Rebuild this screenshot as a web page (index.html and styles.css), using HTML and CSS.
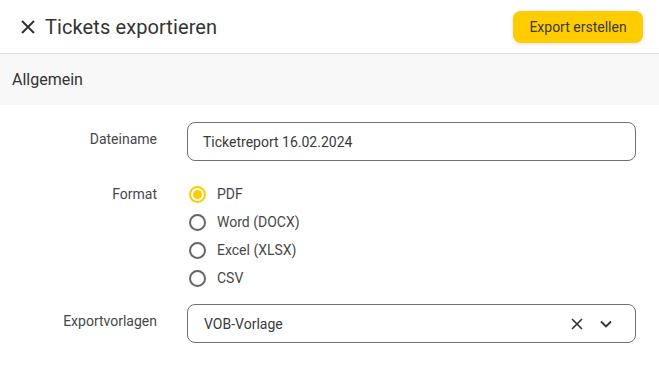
FILE: index.html
```html
<!DOCTYPE html>
<html lang="de">
<head>
<meta charset="utf-8">
<link rel="stylesheet" href="styles.css">
</head>
<body>
<header class="topbar">
  <div class="title-wrap">
    <svg class="close-icon" width="16" height="16" viewBox="0 0 16 16"><path d="M2 2 L14 14 M14 2 L2 14" stroke="#333" stroke-width="2" fill="none"/></svg>
    <h1 class="title">Tickets exportieren</h1>
  </div>
  <button class="primary-btn">Export erstellen</button>
</header>
<div class="section-head">Allgemein</div>
<form class="form">
  <label class="field-label label-input">Dateiname</label>
  <div class="input-box">Ticketreport 16.02.2024</div>

  <div class="field-label label-radio">Format</div>
  <div class="radio-group">
    <div class="radio-row"><span class="radio checked"></span><span>PDF</span></div>
    <div class="radio-row"><span class="radio"></span><span>Word (DOCX)</span></div>
    <div class="radio-row"><span class="radio"></span><span>Excel (XLSX)</span></div>
    <div class="radio-row"><span class="radio"></span><span>CSV</span></div>
  </div>

  <label class="field-label label-input">Exportvorlagen</label>
  <div class="input-box select-box">
    <span>VOB-Vorlage</span>
    <span class="select-icons">
      <svg width="12" height="12" viewBox="0 0 12 12"><path d="M1 1 L11 11 M11 1 L1 11" stroke="#333" stroke-width="1.6" fill="none"/></svg>
      <svg width="14" height="10" viewBox="0 0 14 10"><path d="M2 2.5 L7 7.5 L12 2.5" stroke="#333" stroke-width="1.8" fill="none"/></svg>
    </span>
  </div>
</form>
</body>
</html>
```
FILE: styles.css
```css
* { box-sizing: border-box; }
body {
  margin: 0;
  font-family: Roboto, "Liberation Sans", sans-serif;
  color: #333;
  background: #fff;
}
.topbar {
  height: 54px;
  border-bottom: 1px solid #dedede;
  display: flex;
  align-items: center;
  justify-content: space-between;
  padding: 0 16px 0 20px;
}
.title-wrap {
  display: flex;
  align-items: center;
  gap: 9px;
}
.close-icon { display: block; }
.title {
  margin: 0;
  font-size: 20px;
  font-weight: 400;
  color: #333;
  letter-spacing: 0.1px;
}
.primary-btn {
  width: 130px;
  height: 32px;
  border: none;
  border-radius: 8px;
  background: #ffcc00;
  color: #3a3a3a;
  font-family: Roboto, "Liberation Sans", sans-serif;
  font-size: 14px;
  box-shadow: 0 1px 4px rgba(0,0,0,0.12);
}
.section-head {
  height: 51px;
  background: #f8f8f8;
  display: flex;
  align-items: center;
  padding-left: 12px;
  font-size: 16px;
  font-weight: 400;
  color: #333;
}
.form {
  display: grid;
  grid-template-columns: 157px 449px;
  column-gap: 30px;
  padding-top: 17px;
}
.field-label {
  text-align: right;
  font-size: 14px;
  color: #474747;
}
.label-input { padding-top: 9px; }
.label-radio {
  margin-top: 19px;
  line-height: 28px;
}
.input-box {
  height: 39px;
  border: 1px solid #707070;
  border-radius: 8px;
  display: flex;
  align-items: center;
  padding-left: 15px;
  font-size: 14px;
  color: #3a3a3a;
}
.radio-group {
  margin-top: 19px;
  margin-bottom: 12px;
  display: flex;
  flex-direction: column;
}
.radio-row {
  height: 28px;
  display: flex;
  align-items: center;
  gap: 11px;
  font-size: 14px;
  color: #474747;
}
.radio {
  width: 17px;
  height: 17px;
  border: 2px solid #666;
  border-radius: 50%;
  margin-left: 2px;
  display: inline-flex;
  align-items: center;
  justify-content: center;
}
.radio.checked {
  border-color: #ffcc00;
}
.radio.checked::after {
  content: "";
  width: 9px;
  height: 9px;
  border-radius: 50%;
  background: #ffcc00;
}
.select-box {
  justify-content: space-between;
  padding-left: 16px;
  padding-right: 22px;
}
.select-icons {
  display: flex;
  align-items: center;
  gap: 16px;
}
.select-icons svg { display: block; }
```
